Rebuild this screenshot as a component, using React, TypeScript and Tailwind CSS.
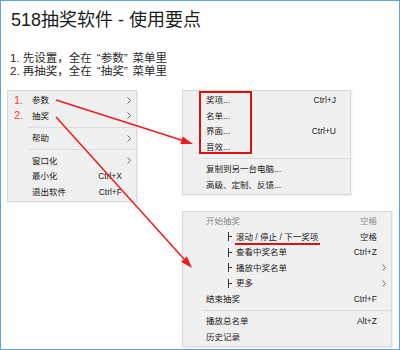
import React from 'react';

type Item = {
  label?: string;
  key?: string;
  sub?: boolean;
  gray?: boolean;
  mark?: boolean;
  shortcut?: string;
  shortcutGray?: boolean;
  num?: string;
  sep?: boolean;
};

const font = { fontFamily: '"Liberation Sans", "Noto Sans CJK SC", sans-serif' };

function Chevron() {
  return (
    <svg width="4" height="7" viewBox="0 0 4 7" className="block">
      <path d="M0.5 0.5 L3.5 3.5 L0.5 6.5" fill="none" stroke="#6b6b6b" strokeWidth="1" />
    </svg>
  );
}

function Tee() {
  // the little "├" branch mark in front of sub items
  return (
    <span className="relative ml-[22px] mr-[4px] inline-block h-[9px] w-[4px] border-l border-[#333]">
      <span className="absolute left-0 top-[4px] h-px w-[3px] bg-[#333]" />
    </span>
  );
}

function Menu({ items, width, padLeft, sepLeft }: { items: Item[]; width: string; padLeft: string; sepLeft: string }) {
  return (
    <div className={`relative ${width} border border-[#d9d9d9] bg-[#f0f0f0] py-[1.5px] shadow-[1px_1px_2px_rgba(0,0,0,0.08)]`}>
      {items.map((it, i) =>
        it.sep ? (
          <div key={i} className={`my-[3px] h-px ${sepLeft} bg-[#dcdcdc]`} />
        ) : (
          <div key={i} className={`relative flex h-[15.5px] items-center ${padLeft} text-[8.5px] leading-none`}>
            {it.num && (
              <span className="absolute left-[6px] top-[2px] text-[11px] leading-none text-[#ef4444]">{it.num}</span>
            )}
            <span className={`flex flex-1 items-center ${it.gray ? 'text-[#8a8a8a]' : 'text-[#1a1a1a]'}`}>
              {it.sub && <Tee />}
              <span className="relative">
                {it.label}
                {it.mark && <span className="absolute left-[-1px] right-[-2px] top-[10px] h-[2px] bg-[#e01010]" />}
              </span>
            </span>
            {it.shortcut && (
              <span className={it.shortcutGray ? 'text-[#8a8a8a]' : 'text-[#1a1a1a]'}>{it.shortcut}</span>
            )}
            <span className="flex w-[14px] items-center justify-center">{it.key === 'arrow' && <Chevron />}</span>
          </div>
        )
      )}
    </div>
  );
}

const leftItems: Item[] = [
  { label: '参数', key: 'arrow', num: '1.' },
  { label: '抽奖', key: 'arrow', num: '2.' },
  { sep: true },
  { label: '帮助', key: 'arrow' },
  { sep: true },
  { label: '窗口化', key: 'arrow' },
  { label: '最小化', shortcut: 'Ctrl+X' },
  { label: '退出软件', shortcut: 'Ctrl+F' },
];

const paramItems: Item[] = [
  { label: '奖项...', shortcut: 'Ctrl+J' },
  { label: '名单...' },
  { label: '界面...', shortcut: 'Ctrl+U' },
  { label: '音效...' },
  { sep: true },
  { label: '复制到另一台电脑...' },
  { label: '高级、定制、反馈...' },
];

const drawItems: Item[] = [
  { label: '开始抽奖', gray: true, shortcut: '空格', shortcutGray: true },
  { label: '滚动 / 停止 / 下一奖项', sub: true, mark: true, shortcut: '空格' },
  { label: '查看中奖名单', sub: true, shortcut: 'Ctrl+Z' },
  { label: '播放中奖名单', sub: true, key: 'arrow' },
  { label: '更多', sub: true, key: 'arrow' },
  { label: '结束抽奖', shortcut: 'Ctrl+F' },
  { sep: true },
  { label: '播放总名单', shortcut: 'Alt+Z' },
  { label: '历史记录' },
];

function Tip({ lead, word }: { lead: string; word: string }) {
  return (
    <p>
      {lead}
      <span className="ml-[5px]">“{word}”</span>
      <span className="ml-[5px]">菜单里</span>
    </p>
  );
}

export default function App() {
  return (
    <div className="relative h-[350px] w-[400px] overflow-hidden border border-[#5ba3e2] bg-white" style={font}>
      <h1 className="pl-[10px] pt-[6px] text-[18px] font-normal leading-[26px] text-[#1c1c1c]">518抽奖软件 - 使用要点</h1>
      <div className="mt-[19px] pl-[9px] text-[11.5px] leading-[13px] text-[#2a2a2a]">
        <Tip lead="1. 先设置，全在" word="参数" />
        <Tip lead="2. 再抽奖，全在" word="抽奖" />
      </div>

      <div className="mt-[12px] flex items-start pl-[6px]">
        <Menu items={leftItems} width="w-[130px]" padLeft="pl-[24px]" sepLeft="ml-[21px]" />
        <div className="ml-[45px] flex flex-col gap-[16px]">
          <div className="relative">
            <Menu items={paramItems} width="w-[169px]" padLeft="pl-[23px]" sepLeft="ml-[20px]" />
            <div className="absolute left-[17px] top-[1px] h-[63px] w-[53px] border-2 border-[#e01010]" />
          </div>
          <Menu items={drawItems} width="w-[210px]" padLeft="pl-[23px]" sepLeft="ml-[20px]" />
        </div>
      </div>

      <svg className="absolute left-[-1px] top-[-1px]" width="400" height="350" viewBox="0 0 400 350">
        <line x1="56" y1="100" x2="182" y2="140.3" stroke="#ee1c1c" strokeWidth="1.5" />
        <polygon points="193,144 180.4,144.1 182.8,136.5" fill="#ee1c1c" />
        <line x1="56" y1="117" x2="184" y2="259.1" stroke="#ee1c1c" strokeWidth="1.5" />
        <polygon points="192,268 181,261.8 187,256.4" fill="#ee1c1c" />
      </svg>
    </div>
  );
}
